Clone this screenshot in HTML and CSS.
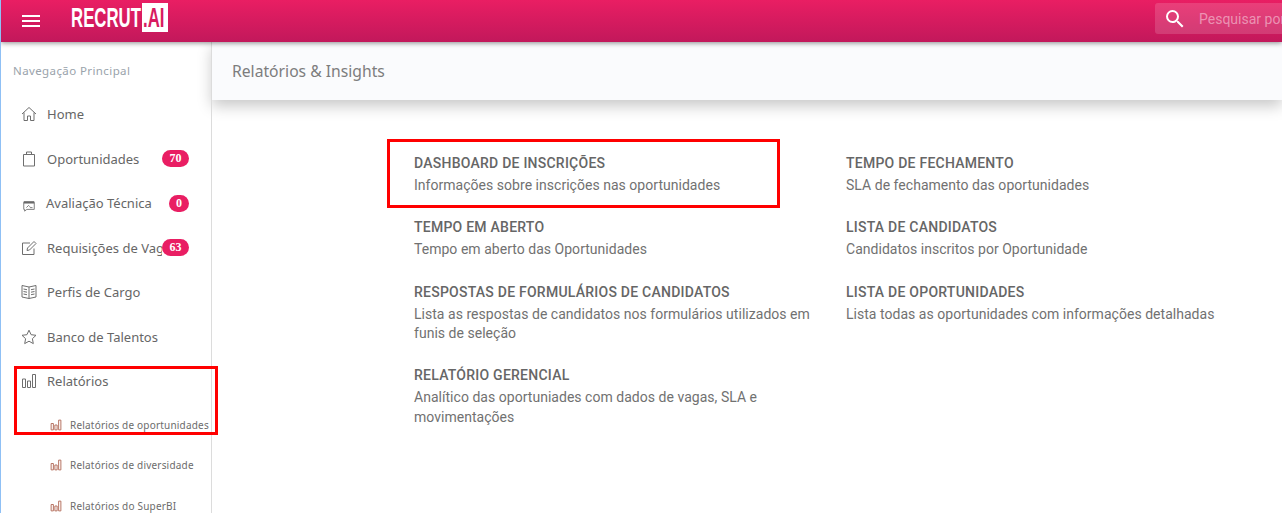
FILE: index.html
```html
<!DOCTYPE html>
<html lang="pt-BR">
<head>
    <meta charset="UTF-8">
    <meta name="viewport" content="width=device-width, initial-scale=1.0">
    <title>Relatórios &amp; Insights</title>
    <link rel="stylesheet" href="styles.css">
</head>
<body>

    <header class="topbar">
        <button class="menu-btn" aria-label="Menu"><span></span><span></span><span></span></button>
        <div class="logo">
            <span class="logo-text">RECRUT</span>
            <span class="logo-box"><span class="logo-text">.AI</span></span>
        </div>
        <div class="search">
            <svg class="search-icon" viewBox="0 0 24 24" width="24" height="24"><path d="M15.5 14h-.79l-.28-.27A6.47 6.47 0 0 0 16 9.5 6.5 6.5 0 1 0 9.5 16c1.61 0 3.09-.59 4.23-1.57l.27.28v.79l5 4.99L20.49 19l-4.99-5zm-6 0C7.01 14 5 11.99 5 9.5S7.01 5 9.5 5 14 7.01 14 9.5 11.99 14 9.5 14z"/></svg>
            <span class="search-text">Pesquisar por</span>
        </div>
    </header>

    <div class="layout">
        <aside class="sidebar">
            <p class="nav-title">Navegação Principal</p>
            <nav>
                <a class="nav-item">
                    <svg class="nav-icon" viewBox="0 0 16 16"><path d="M1 8l7-6.5L15 8M3 6.500v8h3.500V10h3v4.500H13v-8"/></svg>
                    <span class="nav-label">Home</span>
                </a>
                <a class="nav-item">
                    <svg class="nav-icon" viewBox="0 0 16 16"><path d="M2.500 3.500h11v11.500h-11zM5.500 3.500V1h5v2.500"/></svg>
                    <span class="nav-label">Oportunidades</span>
                    <span class="badge">70</span>
                </a>
                <a class="nav-item">
                    <svg class="nav-icon nav-icon-board" viewBox="0 0 16 16"><path class="board-top" d="M2 5h12"/><path d="M2 5h12v8H5.500L3 15v-2H2zM5 11l2.500-2.500L9 10M9 11h3"/></svg>
                    <span class="nav-label nav-label-tight">Avaliação Técnica</span>
                    <span class="badge badge-small">0</span>
                </a>
                <a class="nav-item">
                    <svg class="nav-icon" viewBox="0 0 16 16"><path d="M13 8.500v6H1.500V3H9M6 10.500l.5-2.500L13 1.500l2 2L8.500 10z"/></svg>
                    <span class="nav-label nav-clip">Requisições de Vagas</span>
                    <span class="badge">63</span>
                </a>
                <a class="nav-item">
                    <svg class="nav-icon" viewBox="0 0 16 16"><path d="M1 1.500l7 1.500 7-1.500v11.500l-7 1.500-7-1.500zM8 3v11.500M2.500 5L6 5.700M2.500 7.500L6 8.200M2.500 10L6 10.700M13.500 5L10 5.700M13.500 7.500L10 8.200M13.500 10L10 10.700"/></svg>
                    <span class="nav-label">Perfis de Cargo</span>
                </a>
                <a class="nav-item">
                    <svg class="nav-icon" viewBox="0 0 16 16"><path d="M8 1.200l2.100 4.500 4.900.6-3.600 3.400.9 4.900L8 12.200l-4.300 2.400.9-4.900L1 6.300l4.900-.6z"/></svg>
                    <span class="nav-label">Banco de Talentos</span>
                </a>
                <a class="nav-item">
                    <svg class="nav-icon" viewBox="0 0 16 16"><path d="M1.500 6h3v8.500h-3zM6.500 8h3v6.500h-3zM11.500 1.500h3v13h-3z"/></svg>
                    <span class="nav-label">Relatórios</span>
                </a>
                <a class="sub-item">
                    <svg class="sub-icon" viewBox="0 0 16 16"><path d="M1.500 6h3v8.500h-3zM6.500 8h3v6.500h-3zM11.500 1.500h3v13h-3z"/></svg>
                    <span>Relatórios de oportunidades</span>
                </a>
                <a class="sub-item">
                    <svg class="sub-icon" viewBox="0 0 16 16"><path d="M1.500 6h3v8.500h-3zM6.500 8h3v6.500h-3zM11.500 1.500h3v13h-3z"/></svg>
                    <span>Relatórios de diversidade</span>
                </a>
                <a class="sub-item">
                    <svg class="sub-icon" viewBox="0 0 16 16"><path d="M1.500 6h3v8.500h-3zM6.500 8h3v6.500h-3zM11.500 1.500h3v13h-3z"/></svg>
                    <span>Relatórios do SuperBI</span>
                </a>
            </nav>
            <!-- marcação vermelha do print -->
            <div class="mark mark-side"></div>
        </aside>

        <main class="content">
            <div class="page-title">Relatórios &amp; Insights</div>
            <div class="reports">
                <div class="report-col">
                    <a class="report">
                        <h3>DASHBOARD DE INSCRIÇÕES</h3>
                        <p>Informações sobre inscrições nas oportunidades</p>
                        <div class="mark mark-report"></div>
                    </a>
                    <a class="report">
                        <h3>TEMPO EM ABERTO</h3>
                        <p>Tempo em aberto das Oportunidades</p>
                    </a>
                    <a class="report">
                        <h3>RESPOSTAS DE FORMULÁRIOS DE CANDIDATOS</h3>
                        <p>Lista as respostas de candidatos nos formulários utilizados em funis de seleção</p>
                    </a>
                    <a class="report">
                        <h3>RELATÓRIO GERENCIAL</h3>
                        <p>Analítico das oportuniades com dados de vagas, SLA e movimentações</p>
                    </a>
                </div>
                <div class="report-col">
                    <a class="report">
                        <h3>TEMPO DE FECHAMENTO</h3>
                        <p>SLA de fechamento das oportunidades</p>
                    </a>
                    <a class="report">
                        <h3>LISTA DE CANDIDATOS</h3>
                        <p>Candidatos inscritos por Oportunidade</p>
                    </a>
                    <a class="report">
                        <h3>LISTA DE OPORTUNIDADES</h3>
                        <p>Lista todas as oportunidades com informações detalhadas</p>
                    </a>
                </div>
            </div>
        </main>
    </div>

</body>
</html>
```

FILE: styles.css
```css
html, body {
    height: 513px;
    overflow: hidden;
}

body {
    margin: 0;
    font-family: 'Roboto', sans-serif;
    background-color: #fff;
    color: #6b6b6b;
    border-left: 1px solid #8fc0f5;
}

a {
    display: block;
    text-decoration: none;
    color: inherit;
}

.topbar {
    position: relative;
    z-index: 2;
    height: 42px;
    display: flex;
    align-items: center;
    background: linear-gradient(to bottom, #e91e63, #c2185b);
    box-shadow: 0 1px 5px rgba(0, 0, 0, 0.45);
}

.menu-btn {
    width: 18px;
    padding: 0;
    margin-left: 21px;
    border: none;
    background: none;
    display: flex;
    flex-direction: column;
    gap: 3px;
}

.menu-btn span {
    height: 2px;
    background-color: #fff;
}

.logo {
    margin-left: 31px;
    align-self: flex-start;
    margin-top: 3px;
    height: 29px;
    display: flex;
    align-items: center;
    font-family: 'Liberation Sans', sans-serif;
    font-size: 28px;
    font-weight: 700;
    line-height: 29px;
    color: #fff;
}

.logo-text {
    display: inline-block;
    transform: scaleX(0.6);
    transform-origin: left center;
}

/* le texte est compressé, sa boite garde la largeur d'origine */
.logo > .logo-text {
    width: 71px;
}

.logo-box {
    width: 26px;
    height: 29px;
    background-color: #fff;
    color: #d81b60;
    white-space: nowrap;
    overflow: hidden;
}

.logo-box .logo-text {
    margin-left: 1px;
}

.search {
    margin-left: auto;
    align-self: flex-start;
    margin-top: 3px;
    width: 127px;
    height: 31px;
    display: flex;
    align-items: center;
    border-radius: 3px 0 0 3px;
    background-color: rgba(255, 255, 255, 0.15);
    overflow: hidden;
    white-space: nowrap;
    flex-shrink: 0;
}

.search-icon {
    margin-left: 8px;
    fill: #fff;
    flex-shrink: 0;
}

.search-text {
    margin-left: 12px;
    font-size: 14px;
    color: rgba(255, 255, 255, 0.45);
}

.layout {
    display: flex;
    height: 471px;
}

.sidebar {
    position: relative;
    width: 210px;
    flex-shrink: 0;
    border-right: 1px solid #dcdcdc;
    font-family: 'Noto Sans', sans-serif;
}

.nav-title {
    margin: 21px 0 0 12px;
    font-size: 11.5px;
    line-height: 16px;
    letter-spacing: 0.4px;
    color: #9aa3ab;
}

nav {
    margin-top: 13px;
}

.nav-item {
    display: flex;
    align-items: center;
    height: 44.500px;
    padding-left: 20px;
    font-size: 13px;
    color: #666;
}

.nav-icon {
    width: 16px;
    height: 16px;
    flex-shrink: 0;
    fill: none;
    stroke: #6e6e6e;
    stroke-width: 1;
}

.nav-icon-board {
    width: 14px;
    height: 14px;
    margin: 4px 1px 0 1px;
}

.board-top {
    stroke-width: 2.500;
    stroke: #555;
}

.nav-label {
    margin-left: 10px;
}

.nav-label-tight {
    margin-left: 9px;
}

.nav-clip {
    width: 115px;
    overflow: hidden;
    white-space: nowrap;
}

.badge {
    margin-left: auto;
    margin-right: 22px;
    min-width: 27px;
    height: 17px;
    line-height: 17px;
    border-radius: 9px;
    background-color: #e91e63;
    color: #fff;
    font-family: 'Liberation Serif', serif;
    font-size: 12px;
    font-weight: 700;
    text-align: center;
}

.badge-small {
    min-width: 20px;
}

.sub-item {
    display: flex;
    align-items: center;
    height: 40.500px;
    padding-left: 49px;
    font-size: 10px;
    letter-spacing: 0.2px;
    color: #6c6c6c;
    white-space: nowrap;
}

.nav-item + .sub-item {
    margin-top: 1px;
}

.sub-icon {
    width: 12px;
    height: 12px;
    margin-right: 8px;
    flex-shrink: 0;
    fill: none;
    stroke: #b5705f;
    stroke-width: 1.300;
}

.mark {
    position: absolute;
    border: 3px solid #f00;
    box-sizing: border-box;
    pointer-events: none;
}

.mark-side {
    left: 13px;
    top: 324px;
    width: 204px;
    height: 69px;
}

.content {
    flex: 1;
    min-width: 0;
}

.page-title {
    height: 58px;
    line-height: 59px;
    padding-left: 20px;
    background-color: #fafbfd;
    font-family: 'Noto Sans', sans-serif;
    font-size: 15.700px;
    color: #7d7d7d;
    box-shadow: 0 6px 14px rgba(0, 0, 0, 0.22);
}

.reports {
    display: flex;
    padding: 53.300px 0 0 202px;
}

.report-col {
    width: 432px;
    flex-shrink: 0;
}

.report {
    position: relative;
    width: 400px;
    margin-bottom: 21.600px;
    font-size: 14px;
    line-height: 19.600px;
}

.report h3 {
    margin: 0 0 3px;
    font-size: 14px;
    font-weight: 500;
    line-height: 20px;
    letter-spacing: 0.24px;
    color: #666;
}

.report p {
    margin: 0;
    letter-spacing: 0.03px;
    color: #717171;
}

.mark-report {
    left: -27px;
    top: -14px;
    width: 393px;
    height: 69px;
}
```
